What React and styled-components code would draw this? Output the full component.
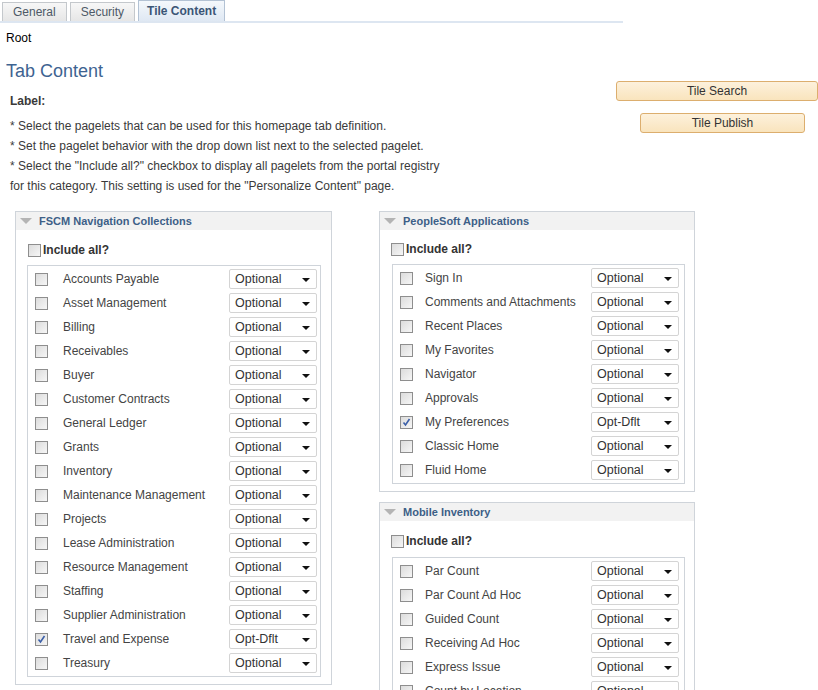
import React from 'react';
import styled, { createGlobalStyle } from 'styled-components';

const GlobalStyle = createGlobalStyle`
  body {
    margin: 0;
    background: #fff;
    font-family: "Liberation Sans", Arial, sans-serif;
    color: #333;
  }
`;

const Page = styled.div`
  width: 818px;
  overflow: hidden;
`;

const TabBar = styled.div`
  display: flex;
  align-items: flex-end;
  gap: 3px;
  width: 621px;
  height: 21px;
  padding-left: 2px;
  border-bottom: 2px solid #dde6f1;
`;

const Tab = styled.div`
  box-sizing: border-box;
  height: ${p => (p.active ? '21px' : '19px')};
  padding: 0 ${p => (p.active ? '8px' : '10px')};
  border: 1px solid ${p => (p.active ? '#b3c2d4' : '#c4c8cc')};
  border-bottom: none;
  background: ${p => (p.active
    ? 'linear-gradient(#f4f8fc, #dfe8f3)'
    : 'linear-gradient(#f7f7f7, #e6e6e6)')};
  font-size: 12px;
  line-height: ${p => (p.active ? '20px' : '18px')};
  font-weight: ${p => (p.active ? 'bold' : 'normal')};
  color: ${p => (p.active ? '#3b5576' : '#4d5966')};
`;

const Top = styled.div`
  display: flex;
  padding-left: 6px;
`;

const Intro = styled.div`
  width: 611px;
`;

const Crumb = styled.div`
  margin-top: 7px;
  font-size: 12px;
  line-height: 16px;
  color: #000;
`;

const Title = styled.h1`
  margin: 13px 0 0;
  font-size: 18px;
  line-height: 24px;
  font-weight: normal;
  color: #3e6391;
`;

const LabelText = styled.div`
  margin: 10px 0 0 4px;
  font-size: 12px;
  line-height: 16px;
  font-weight: bold;
  color: #3a3a3a;
`;

const Notes = styled.div`
  margin: 7px 0 0 4px;
  font-size: 12px;
  line-height: 20px;
  color: #3a3a3a;
`;

const Actions = styled.div`
  display: flex;
  flex-direction: column;
  gap: 12px;
  padding-top: 58px;
`;

const ActionButton = styled.button`
  box-sizing: border-box;
  width: ${p => p.w}px;
  height: 20px;
  margin-left: ${p => p.offset || 0}px;
  padding: 0;
  border: 1px solid #dcae6e;
  border-radius: 3px;
  background: linear-gradient(#fdf1dc, #f9e4bd);
  font-family: "Liberation Sans", Arial, sans-serif;
  font-size: 12px;
  color: #333;
`;

const Groups = styled.div`
  display: flex;
  align-items: flex-start;
  gap: 47px;
  margin-top: 15px;
  padding-left: 15px;
`;

const Column = styled.div`
  display: flex;
  flex-direction: column;
  gap: 10px;
`;

const Group = styled.section`
  box-sizing: border-box;
  width: ${p => p.w}px;
  border: 1px solid #cfd4da;
  padding-bottom: 7px;
`;

const GroupHead = styled.div`
  display: flex;
  align-items: center;
  gap: 7px;
  height: 18px;
  padding-left: 4px;
  background: #f2f2f2;
  font-size: 11px;
  font-weight: bold;
  color: #3d5f87;
`;

const Caret = styled.span`
  width: 0;
  height: 0;
  border-left: 6px solid transparent;
  border-right: 6px solid transparent;
  border-top: 6px solid #b4b4b4;
`;

const IncludeAll = styled.label`
  display: flex;
  align-items: center;
  gap: 2px;
  height: 16px;
  margin: ${p => p.top}px 0 0 ${p => p.inset}px;
  font-size: 12px;
  font-weight: bold;
  color: #333;
`;

const ListBox = styled.div`
  margin: ${p => p.top}px ${p => p.right}px 0 ${p => p.left}px;
  padding: 1px 0 1px;
  border: 1px solid #cfd4da;
`;

const Row = styled.div`
  display: grid;
  grid-template-columns: ${p => p.cols};
  align-items: center;
  height: 24px;
  font-size: 12px;
  color: #444;
`;

const Box = styled.span`
  box-sizing: border-box;
  display: inline-flex;
  align-items: center;
  justify-content: center;
  width: 13px;
  height: 13px;
  margin-left: ${p => p.inset || 0}px;
  border: 1px solid #8e8e8e;
  background: linear-gradient(135deg, #dcdcdc, #f6f6f6);
`;

const Select = styled.div`
  box-sizing: border-box;
  display: flex;
  align-items: center;
  justify-content: space-between;
  height: 20px;
  padding: 0 6px 0 5px;
  border: 1px solid #d4d4d4;
  border-radius: 2px;
  background: #fff;
  font-size: 12.5px;
  color: #333;
`;

const Arrow = styled.span`
  width: 0;
  height: 0;
  margin-top: 2px;
  border-left: 4px solid transparent;
  border-right: 4px solid transparent;
  border-top: 4px solid #111;
`;

const Check = ({ on, inset }) => (
  <Box inset={inset}>
    {on && (
      <svg width="9" height="9" viewBox="0 0 9 9">
        <path d="M1.5 4.5 L3.5 7 L7.5 1" fill="none" stroke="#3b5fa8" strokeWidth="1.6" />
      </svg>
    )}
  </Box>
);

const fscm = [
  'Accounts Payable', 'Asset Management', 'Billing', 'Receivables', 'Buyer',
  'Customer Contracts', 'General Ledger', 'Grants', 'Inventory',
  'Maintenance Management', 'Projects', 'Lease Administration',
  'Resource Management', 'Staffing', 'Supplier Administration',
  ['Travel and Expense', true], 'Treasury',
];

const apps = [
  'Sign In', 'Comments and Attachments', 'Recent Places', 'My Favorites',
  'Navigator', 'Approvals', ['My Preferences', true], 'Classic Home', 'Fluid Home',
];

const mobile = [
  'Par Count', 'Par Count Ad Hoc', 'Guided Count', 'Receiving Ad Hoc',
  'Express Issue', 'Count by Location', 'Cart Count',
];

const PageletGroup = ({ title, items, layout }) => (
  <Group w={layout.width}>
    <GroupHead><Caret />{title}</GroupHead>
    <IncludeAll inset={layout.include} top={layout.top}>
      <Check />Include all?
    </IncludeAll>
    <ListBox top={layout.listTop} left={layout.left} right={layout.right}>
      {items.map(item => {
        const [name, on] = Array.isArray(item) ? item : [item, false];
        return (
          <Row key={name} cols={layout.cols}>
            <Check on={on} inset={7} />
            <span>{name}</span>
            <Select>
              {on ? 'Opt-Dflt' : 'Optional'}
              <Arrow />
            </Select>
          </Row>
        );
      })}
    </ListBox>
  </Group>
);

const leftLayout = { width: 317, top: 12, listTop: 7, include: 12, left: 11, right: 10, cols: '35px 166px 88px' };
const rightLayout = { width: 316, top: 11, listTop: 7, include: 11, left: 12, right: 9, cols: '32px 166px 88px' };
const mobileLayout = { ...rightLayout, top: 12, listTop: 8 };

export default function App() {
  return (
    <Page>
      <GlobalStyle />
      <TabBar>
        <Tab>General</Tab>
        <Tab>Security</Tab>
        <Tab active>Tile Content</Tab>
      </TabBar>
      <Top>
        <Intro>
          <Crumb>Root</Crumb>
          <Title>Tab Content</Title>
          <LabelText>Label:</LabelText>
          <Notes>
            * Select the pagelets that can be used for this homepage tab definition.<br />
            * Set the pagelet behavior with the drop down list next to the selected pagelet.<br />
            * Select the "Include all?" checkbox to display all pagelets from the portal registry<br />
            for this category. This setting is used for the "Personalize Content" page.
          </Notes>
        </Intro>
        <Actions>
          <ActionButton w={202}>Tile Search</ActionButton>
          <ActionButton w={165} offset={24}>Tile Publish</ActionButton>
        </Actions>
      </Top>
      <Groups>
        <PageletGroup title="FSCM Navigation Collections" items={fscm} layout={leftLayout} />
        <Column>
          <PageletGroup title="PeopleSoft Applications" items={apps} layout={rightLayout} />
          <PageletGroup title="Mobile Inventory" items={mobile} layout={mobileLayout} />
        </Column>
      </Groups>
    </Page>
  );
}
